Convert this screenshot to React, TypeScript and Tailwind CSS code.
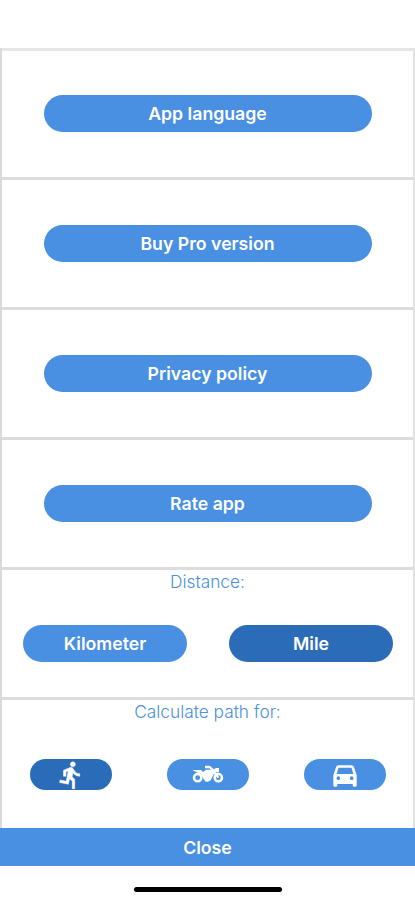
import { clsx } from 'clsx';

const actions = ['App language', 'Buy Pro version', 'Privacy policy', 'Rate app'];

const pill = 'flex items-center justify-center rounded-full text-white';

const RunIcon = () => (
  <svg width="30" height="30" viewBox="0 0 24 24" fill="currentColor">
    <path
      d="M13.49 5.48c1.1 0 2-.9 2-2s-.9-2-2-2-2 .9-2 2 .9 2 2 2zm-3.6 13.9 1-4.4 2.1 2v6h2v-7.5l-2.1-2 .6-3c1.3 1.5 3.3 2.5 5.5 2.5v-2c-1.9 0-3.5-1-4.3-2.4l-1-1.6c-.4-.6-1-1-1.7-1-.3 0-.5.1-.8.1l-5.2 2.2v4.7h2v-3.4l1.8-.7-1.6 8.1-4.9-1-.4 2 7 1.4z"
      stroke="currentColor"
      strokeWidth="0.4"
    />
  </svg>
);

const MotorcycleIcon = () => (
  <svg width="32" height="19" viewBox="0 0 96 57" fill="none" stroke="currentColor">
    <circle cx="17" cy="38" r="11" strokeWidth="7.5" />
    <circle cx="79" cy="38" r="11" strokeWidth="7.5" />
    <path d="M39 6h14l10 10 16 22" strokeWidth="7" strokeLinejoin="round" />
    <path d="M60 16 72 9h9v13H68z" fill="currentColor" stroke="none" />
    <path
      d="M1 15h26l6 6 9-7h18l9 8-7 12-6 12-9 4H41l-7-9-7-14-13-5z"
      fill="currentColor"
      stroke="none"
    />
  </svg>
);

const CarIcon = () => (
  <svg width="24" height="22" viewBox="0 0 72 66" fill="currentColor">
    <path
      fillRule="evenodd"
      d="M17 1h38c4 0 7 2 8 6l8 24v30c0 3-1 4-4 4h-4c-3 0-4-1-4-4v-4H13v4c0 3-1 4-4 4H5c-3 0-4-1-4-4V31L9 7c1-4 4-6 8-6Zm1 7c-1 0-2 1-2 2l-5 17h50l-5-17c0-1-1-2-2-2H18Zm-2 26a5.5 5.5 0 1 0 0 11 5.5 5.5 0 0 0 0-11Zm40 0a5.5 5.5 0 1 0 0 11 5.5 5.5 0 0 0 0-11Z"
    />
  </svg>
);

const App = () => {
  return (
    <div className="flex h-[900px] w-[415px] flex-col bg-white pt-12 font-['Inter',sans-serif]">
      <main className="flex h-[780px] flex-col border-r-2 border-l-2 border-r-[#e2e2e2] border-l-[#dadada]">
        {actions.map((label, i) => (
          <section
            key={label}
            className={clsx(
              'flex justify-center border-t-[3px]',
              i === 0 ? 'h-[129px] border-[#e6e6e6] pt-11' : 'h-[130px] border-[#dcdcdc] pt-[45px]',
            )}
          >
            <button
              className={clsx(
                pill,
                'h-[37px] w-[328px] bg-[#4990e2] pt-0.5 text-[17.7px] font-semibold',
              )}
            >
              {label}
            </button>
          </section>
        ))}

        <section className="h-[130px] border-t-[3px] border-[#dcdcdc]">
          <h2 className="h-6 text-center text-[17.3px] leading-6 font-light text-[#4990e2]">
            Distance:
          </h2>
          <div className="mt-[31px] flex justify-between pr-5 pl-[21px] text-[17.7px] font-semibold">
            <button className={clsx(pill, 'h-[37px] w-[164px] bg-[#4990e2] pt-0.5')}>
              Kilometer
            </button>
            <button className={clsx(pill, 'h-[37px] w-[164px] bg-[#2b6cb8] pt-0.5')}>Mile</button>
          </div>
        </section>

        <section className="h-[131px] border-t-[3px] border-[#dcdcdc]">
          <h2 className="h-6 text-center text-[17.3px] leading-6 font-light text-[#4990e2]">
            Calculate path for:
          </h2>
          <div className="mt-[35px] flex justify-between pr-[27px] pl-7">
            <button aria-label="Run" className={clsx(pill, 'h-[31px] w-[82px] bg-[#2b6cb8]')}>
              <RunIcon />
            </button>
            <button aria-label="Motorcycle" className={clsx(pill, 'h-[31px] w-[82px] bg-[#4990e2]')}>
              <MotorcycleIcon />
            </button>
            <button
              aria-label="Car"
              className={clsx(pill, 'h-[31px] w-[82px] bg-[#4990e2] pt-0.5')}
            >
              <CarIcon />
            </button>
          </div>
        </section>
      </main>

      <button className="h-[38px] w-full bg-[#4990e2] pt-0.5 text-[17.7px] font-semibold text-white">
        Close
      </button>
      <div className="mx-auto mt-[21px] h-[5px] w-[148px] rounded-full bg-black" />
    </div>
  );
};

export default App;
